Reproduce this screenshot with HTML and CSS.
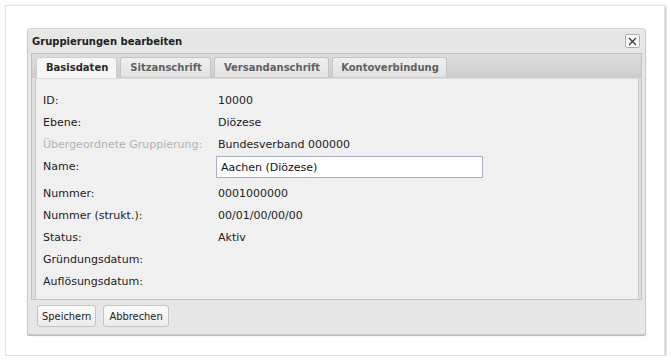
FILE: index.html
```html
<!DOCTYPE html>
<html lang="de">
<head>
    <meta charset="UTF-8">
    <title>Gruppierungen bearbeiten</title>
    <link rel="stylesheet" href="styles.css">
</head>
<body>
    <div class="page">
        <div class="dialog">
            <div class="dialog-title">
                <span>Gruppierungen bearbeiten</span>
                <button class="close" title="Schließen">
                    <svg width="9" height="9" viewBox="0 0 9 9"><path d="M1 1L8 8M8 1L1 8" stroke="#333" stroke-width="1.2" fill="none"/></svg>
                </button>
            </div>

            <div class="tabs">
                <ul class="tab-strip">
                    <li class="tab active">Basisdaten</li>
                    <li class="tab">Sitzanschrift</li>
                    <li class="tab">Versandanschrift</li>
                    <li class="tab">Kontoverbindung</li>
                </ul>
                <div class="panel">
                    <div class="row"><span class="label">ID:</span><span class="value">10000</span></div>
                    <div class="row"><span class="label">Ebene:</span><span class="value">Diözese</span></div>
                    <div class="row"><span class="label disabled">Übergeordnete Gruppierung:</span><span class="value">Bundesverband 000000</span></div>
                    <div class="row row-input"><span class="label">Name:</span><input class="field" type="text" value="Aachen (Diözese)"></div>
                    <div class="row"><span class="label">Nummer:</span><span class="value">0001000000</span></div>
                    <div class="row"><span class="label">Nummer (strukt.):</span><span class="value">00/01/00/00/00</span></div>
                    <div class="row"><span class="label">Status:</span><span class="value">Aktiv</span></div>
                    <div class="row"><span class="label">Gründungsdatum:</span><span class="value"></span></div>
                    <div class="row"><span class="label">Auflösungsdatum:</span><span class="value"></span></div>
                </div>
            </div>

            <div class="buttons">
                <button class="btn">Speichern</button>
                <button class="btn">Abbrechen</button>
            </div>
        </div>
    </div>
</body>
</html>
```

FILE: styles.css
```css
body {
    margin: 0;
    background: #fff;
    font-family: "DejaVu Sans", Verdana, sans-serif;
    font-size: 11px;
    color: #222;
}
.page {
    margin: 5px 5px 0 5px;
    width: 660px;
    height: 351px;
    box-sizing: border-box;
    border: 1px solid #e4e4e4;
    box-shadow: 1px 1px 2px #bdbdbd;
    padding: 22px 0 0 21px;
}
.dialog {
    width: 619px;
    height: 307px;
    box-sizing: border-box;
    background: #e7e7e7;
    border: 1px solid #cfcaca;
    border-top-color: #d9d6d6;
    border-radius: 4px 4px 2px 2px;
    box-shadow: 0 1px 1px #b5b5b5;
    padding: 0 3px;
}
.dialog-title {
    display: flex;
    align-items: center;
    justify-content: space-between;
    height: 24px;
    padding: 0 2px 0 1px;
    font-weight: bold;
    font-size: 10px;
    color: #222;
}
.close {
    width: 15px;
    height: 14px;
    padding: 0;
    border: 1px solid #b0b0b0;
    border-radius: 2px;
    background: #fafafa;
    display: flex;
    align-items: center;
    justify-content: center;
}
.tabs {
    border: 1px solid #c6bfbf;
    background: linear-gradient(#dedede, #cccccc 24px, #e0e0e0 24px);
    padding: 3px 2px 1px 3px;
    height: 247px;
    box-sizing: border-box;
}
.tab-strip {
    list-style: none;
    margin: 0;
    padding: 0 0 0 1px;
    display: flex;
    gap: 3px;
    height: 21px;
}
.tab {
    height: 20px;
    box-sizing: border-box;
    padding: 0 8px 0 9px;
    line-height: 19px;
    font-weight: bold;
    font-size: 10px;
    color: #606060;
    background: linear-gradient(#f0f0f0, #e2e2e2);
    border: 1px solid #c4c4c4;
    border-bottom: none;
    border-radius: 3px 3px 0 0;
}
.tab:last-child {
    padding: 0 7px 0 8px;
}
.tab.active {
    height: 21px;
    color: #2a2a2a;
    background: #f6f6f6;
    border-color: #cfcfcf;
}
.panel {
    background: #f0f0f0;
    border: 1px solid #c9c2c2;
    border-top-color: #dcdcdc;
    padding: 10px 0 0 7px;
    height: 222px;
    box-sizing: border-box;
}
.row {
    display: flex;
    align-items: center;
    height: 22px;
}
.row-input {
    height: 27px;
    align-items: flex-start;
    padding-top: 1px;
    box-sizing: border-box;
}
.row-input .label {
    line-height: 22px;
}
.label {
    width: 175px;
    flex: none;
}
.label.disabled {
    color: #b2b2b2;
}
.field {
    width: 267px;
    height: 22px;
    box-sizing: border-box;
    margin: 0 0 0 -2px;
    border: 1px solid #aab0bd;
    background: #fff;
    padding: 0 4px;
    font-family: "DejaVu Sans", Verdana, sans-serif;
    font-size: 11px;
    color: #111;
}
.buttons {
    display: flex;
    gap: 7px;
    padding: 5px 0 0 6px;
}
.btn {
    height: 22px;
    padding: 0 4px;
    font-family: "DejaVu Sans Condensed", "DejaVu Sans", sans-serif;
    font-size: 11px;
    color: #222;
    background: linear-gradient(#fbfbfb, #ececec);
    border: 1px solid #c3c3c3;
    border-radius: 3px;
}
.btn:last-child {
    padding: 0 5px;
}
```
